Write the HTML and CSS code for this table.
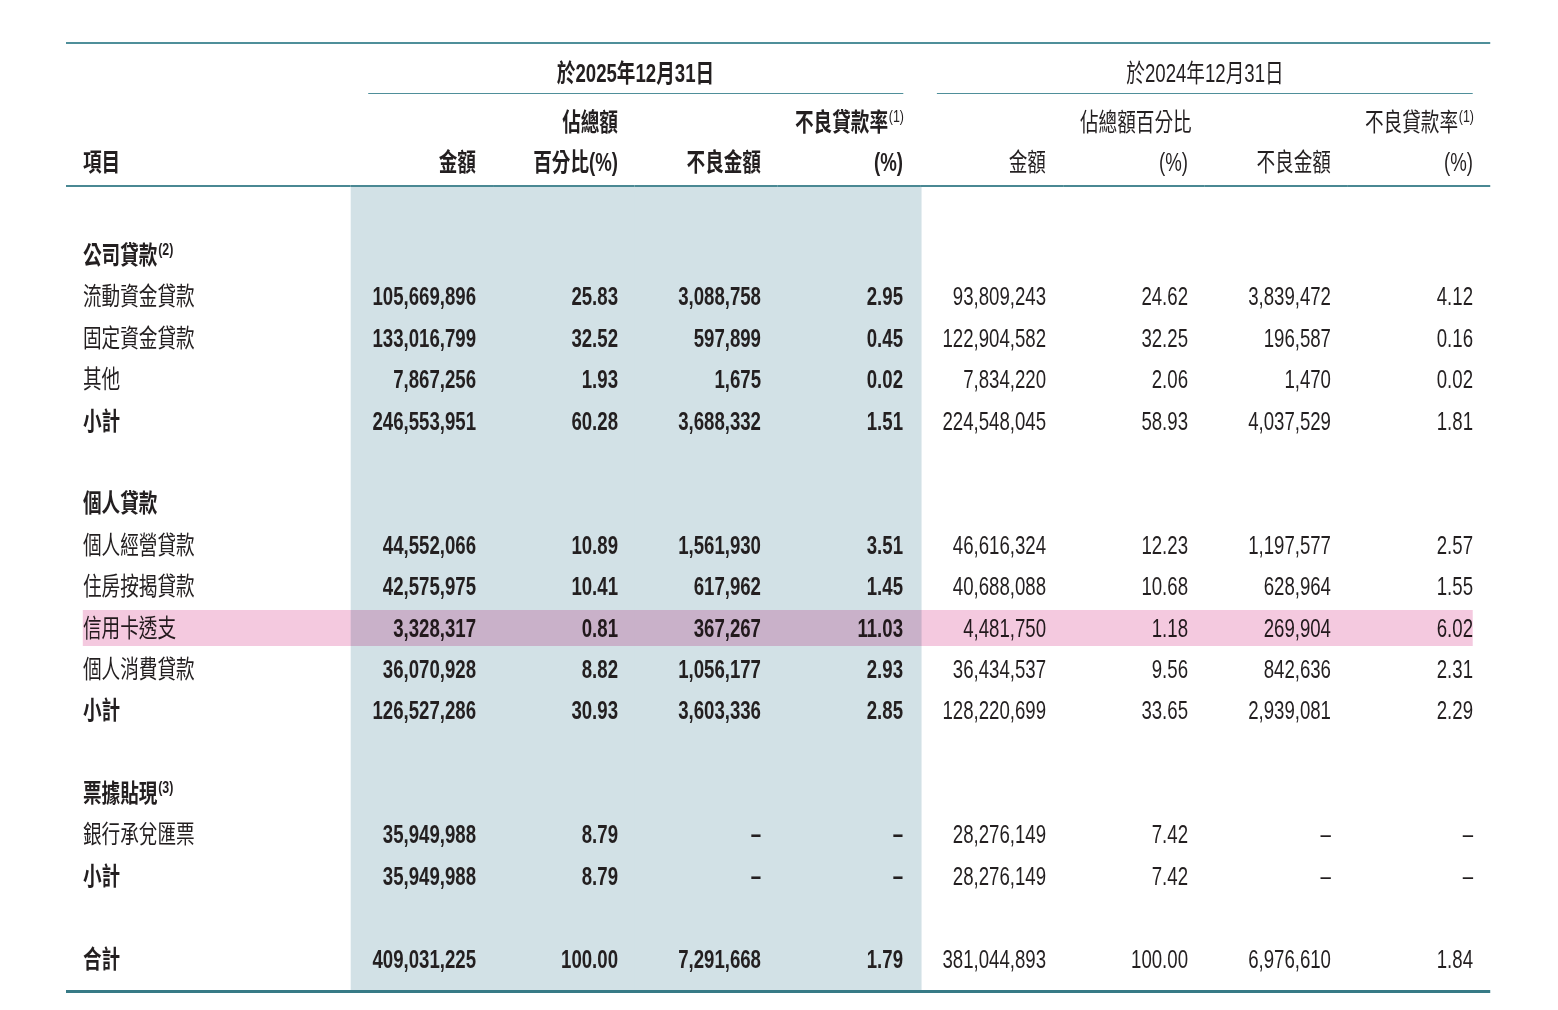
FILE: index.html
```html
<!DOCTYPE html>
<html lang="zh-Hant">
<head>
<meta charset="utf-8">
<title>貸款及墊款</title>
<link rel="stylesheet" href="styles.css">
</head>
<body>
<div class="page">
<table class="tbl">
<colgroup>
  <col class="c-label">
  <col class="c-a"><col class="c-a"><col class="c-b"><col class="c-a">
  <col class="c-b"><col class="c-a"><col class="c-b"><col class="c-a">
</colgroup>
<thead>
<tr class="h1">
  <th></th>
  <th colspan="4" class="grp now"><div class="grp-t">於2025年12月31日</div></th>
  <th colspan="4" class="grp"><div class="grp-t">於2024年12月31日</div></th>
</tr>
<tr class="h2">
  <th></th>
  <th class="now"></th>
  <th class="now">佔總額</th>
  <th class="now"></th>
  <th class="now">不良貸款率<sup class="fn">(1)</sup></th>
  <th></th>
  <th>佔總額百分比</th>
  <th></th>
  <th>不良貸款率<sup class="fn">(1)</sup></th>
</tr>
<tr class="h3">
  <th class="now">項目</th>
  <th class="now">金額</th>
  <th class="now">百分比(%)</th>
  <th class="now">不良金額</th>
  <th class="now">(%)</th>
  <th>金額</th>
  <th>(%)</th>
  <th>不良金額</th>
  <th>(%)</th>
</tr>
</thead>
<tbody>
<tr class="gap top"><td></td><td></td><td></td><td></td><td></td><td></td><td></td><td></td><td></td></tr>
<tr class="sec"><td>公司貸款<sup class="fn">(2)</sup></td><td></td><td></td><td></td><td></td><td></td><td></td><td></td><td></td></tr>
<tr><td>流動資金貸款</td><td>105,669,896</td><td>25.83</td><td>3,088,758</td><td>2.95</td><td>93,809,243</td><td>24.62</td><td>3,839,472</td><td>4.12</td></tr>
<tr><td>固定資金貸款</td><td>133,016,799</td><td>32.52</td><td>597,899</td><td>0.45</td><td>122,904,582</td><td>32.25</td><td>196,587</td><td>0.16</td></tr>
<tr><td>其他</td><td>7,867,256</td><td>1.93</td><td>1,675</td><td>0.02</td><td>7,834,220</td><td>2.06</td><td>1,470</td><td>0.02</td></tr>
<tr class="sum"><td>小計</td><td>246,553,951</td><td>60.28</td><td>3,688,332</td><td>1.51</td><td>224,548,045</td><td>58.93</td><td>4,037,529</td><td>1.81</td></tr>
<tr class="gap"><td></td><td></td><td></td><td></td><td></td><td></td><td></td><td></td><td></td></tr>
<tr class="sec"><td>個人貸款</td><td></td><td></td><td></td><td></td><td></td><td></td><td></td><td></td></tr>
<tr><td>個人經營貸款</td><td>44,552,066</td><td>10.89</td><td>1,561,930</td><td>3.51</td><td>46,616,324</td><td>12.23</td><td>1,197,577</td><td>2.57</td></tr>
<tr><td>住房按揭貸款</td><td>42,575,975</td><td>10.41</td><td>617,962</td><td>1.45</td><td>40,688,088</td><td>10.68</td><td>628,964</td><td>1.55</td></tr>
<tr class="hl"><td>信用卡透支</td><td>3,328,317</td><td>0.81</td><td>367,267</td><td>11.03</td><td>4,481,750</td><td>1.18</td><td>269,904</td><td>6.02</td></tr>
<tr><td>個人消費貸款</td><td>36,070,928</td><td>8.82</td><td>1,056,177</td><td>2.93</td><td>36,434,537</td><td>9.56</td><td>842,636</td><td>2.31</td></tr>
<tr class="sum"><td>小計</td><td>126,527,286</td><td>30.93</td><td>3,603,336</td><td>2.85</td><td>128,220,699</td><td>33.65</td><td>2,939,081</td><td>2.29</td></tr>
<tr class="gap"><td></td><td></td><td></td><td></td><td></td><td></td><td></td><td></td><td></td></tr>
<tr class="sec"><td>票據貼現<sup class="fn">(3)</sup></td><td></td><td></td><td></td><td></td><td></td><td></td><td></td><td></td></tr>
<tr><td>銀行承兌匯票</td><td>35,949,988</td><td>8.79</td><td>–</td><td>–</td><td>28,276,149</td><td>7.42</td><td>–</td><td>–</td></tr>
<tr class="sum"><td>小計</td><td>35,949,988</td><td>8.79</td><td>–</td><td>–</td><td>28,276,149</td><td>7.42</td><td>–</td><td>–</td></tr>
<tr class="gap"><td></td><td></td><td></td><td></td><td></td><td></td><td></td><td></td><td></td></tr>
<tr class="sum"><td>合計</td><td>409,031,225</td><td>100.00</td><td>7,291,668</td><td>1.79</td><td>381,044,893</td><td>100.00</td><td>6,976,610</td><td>1.84</td></tr>
<tr class="gap end"><td></td><td></td><td></td><td></td><td></td><td></td><td></td><td></td><td></td></tr>
</tbody>
</table>
</div>
</body>
</html>
```
FILE: styles.css
```css
html, body {
  margin: 0;
  padding: 0;
  background: #ffffff;
  overflow: hidden;
}

.page {
  padding: 42px 0 0 66px;
}

/* The table is laid out wide and compressed horizontally to mimic the condensed typeface.
   Column widths are chosen so that every column edge lands on a whole pixel after scaling. */
.tbl {
  width: 1950.6849px;
  table-layout: fixed;
  border-collapse: separate;
  border-spacing: 0;
  transform: scaleX(0.73);
  transform-origin: 0 0;
  border-top: 2px solid #4f8f9a;
  border-bottom: 3px solid #377a86;
  font-family: "Liberation Sans", "Noto Sans CJK TC", sans-serif;
  font-size: 25.5px;
  color: #231f20;
}

.c-label { width: 390.4110px; }
.c-a { width: 194.5205px; }
.c-b { width: 195.8904px; }

th, td {
  padding: 0 23.29px;
  white-space: nowrap;
  text-align: right;
  font-weight: 400;
  line-height: 30px;
}

th:first-child, td:first-child { text-align: left; }

.now { font-weight: 700; }

.h1 { height: 49.5px; }
.h1 th { vertical-align: bottom; line-height: 28px; }
.grp-t {
  text-align: center;
  line-height: 28px;
  padding-bottom: 6px;
  border-bottom: 1.5px solid #4f8f9a;
}

.h2 { height: 48.5px; }
.h2 th { vertical-align: bottom; line-height: 40px; }

.h3 { height: 45px; }
.h3 th {
  vertical-align: top;
  line-height: 40px;
  border-bottom: 2px solid #4a8893;
}

.fn {
  font-size: 17px;
  line-height: 0;
  vertical-align: 9px;
  font-weight: 400;
  margin-left: 1px;
}

.sec .fn { font-weight: 700; }

tbody tr { height: 41.4px; }
tbody tr.top { height: 47.3px; }
tbody tr.end { height: 10.5px; }
tbody td { vertical-align: middle; }

tbody td:nth-child(n+2):nth-child(-n+5) {
  background-color: #d2e1e6;
  box-shadow: 2px 0 0 #d2e1e6;
  font-weight: 700;
}
tbody td:nth-child(5) { box-shadow: none; }

.sec td:first-child,
.sum td:first-child { font-weight: 700; }

/* highlighted row: one pink band laid over the whole row, multiplied onto what is beneath */
.hl td:first-child {
  position: relative;
}
.hl td:first-child::before {
  content: "";
  position: absolute;
  left: 23.29px;
  top: 2.7px;
  bottom: 2.7px;
  width: 1904.1px;
  background: #f4c9df;
  mix-blend-mode: multiply;
  pointer-events: none;
}
```
